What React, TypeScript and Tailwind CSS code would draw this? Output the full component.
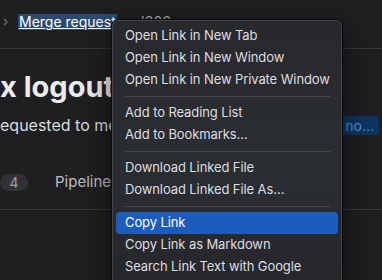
import React from 'react';

type MenuEntry = { label: string; active?: boolean } | 'sep';

const menu: MenuEntry[] = [
  { label: 'Open Link in New Tab' },
  { label: 'Open Link in New Window' },
  { label: 'Open Link in New Private Window' },
  'sep',
  { label: 'Add to Reading List' },
  { label: 'Add to Bookmarks…' },
  'sep',
  { label: 'Download Linked File' },
  { label: 'Download Linked File As…' },
  'sep',
  { label: 'Copy Link', active: true },
  { label: 'Copy Link as Markdown' },
  { label: 'Search Link Text with Google' },
];

const ContextMenu: React.FC = () => (
  <div className="absolute left-[111px] top-[19px] w-[232px] h-[290px] rounded-[7px] border border-[#0b0b0c] bg-linear-to-b from-[#28292c] via-[#2a2d32] to-[#262629] shadow-[inset_0_0_0_1px_rgba(255,255,255,0.13),0_10px_30px_rgba(0,0,0,0.55)] pt-[5px]">
    {menu.map((m, i) =>
      m === 'sep' ? (
        <div key={i} className="h-[11px] flex items-center pl-[13px] pr-[12px]">
          <div className="h-px w-full bg-[#47474b]" />
        </div>
      ) : (
        <div
          key={i}
          className={`h-[22px] mx-[4px] pl-[9px] flex items-center rounded-[4px] text-[13px] tracking-[-0.1px] ${
            m.active ? 'bg-[#1b5cbd] text-white' : 'text-[#dedee0]'
          }`}
        >
          {m.label}
        </div>
      )
    )}
  </div>
);

export default function App() {
  return (
    <div className="relative w-[382px] h-[280px] overflow-hidden bg-[#1f1f22] font-['Inter',sans-serif]">
      {/* Breadcrumb */}
      <div className="h-[49px] border-b border-[#38383c] flex items-start pt-[14px] pl-[3px]">
        <svg width="5" height="8" viewBox="0 0 5 8" className="mt-[4px]">
          <path d="M1 1 L4 4 L1 7" fill="none" stroke="#6c6c72" strokeWidth="1.3" />
        </svg>
        <span className="ml-[10px] bg-[#2c4a6e] text-white underline text-[14px] leading-[16px] px-px whitespace-nowrap">
          Merge request
        </span>
        <span className="ml-[24px] text-[#a3a3a8] text-[14px] leading-[16px]">!306</span>
      </div>

      {/* Title */}
      <div className="mt-[20px] text-[29px] font-bold leading-[36px] text-[#ececef] whitespace-nowrap">
        x logout
      </div>

      {/* Subtitle */}
      <div className="mt-[10px] h-[20px] flex items-center justify-between pr-[3px]">
        <span className="text-[16px] leading-[20px] text-[#dcdcde] whitespace-nowrap">equested to merge</span>
        <span className="h-[19px] px-[5px] rounded-[4px] bg-[#0e3562] text-[#4f93dd] text-[14px] leading-[19px]">
          no…
        </span>
      </div>

      {/* Tabs */}
      <div className="mt-[20px] h-[55px] border-b border-[#38383c] flex items-center">
        <span className="w-[28px] h-[17px] rounded-full bg-[#323235] text-[#9e9ea3] text-[14px] leading-[17px] flex items-center justify-center">
          4
        </span>
        <span className="ml-[27px] text-[15px] text-[#bdbdc0]">Pipelines</span>
      </div>

      <ContextMenu />
    </div>
  );
}
